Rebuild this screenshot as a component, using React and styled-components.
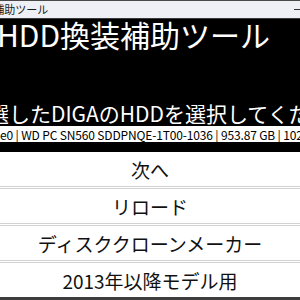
import React from "react";
import styled, { createGlobalStyle } from "styled-components";

// HDD換装補助ツール - cropped window view

const Global = createGlobalStyle`
  html, body {
    margin: 0;
    padding: 0;
    background: #ffffff;
  }
  body {
    width: 300px;
    height: 300px;
    overflow: hidden;
    font-family: "Noto Sans CJK JP", "Noto Sans", sans-serif;
  }
`;

const Window = styled.div`
  width: 300px;
  height: 300px;
  display: flex;
  flex-direction: column;
  overflow: hidden;
  background: #ffffff;
`;

const TitleBar = styled.div`
  height: 17px;
  flex-shrink: 0;
  display: flex;
  align-items: center;
  justify-content: space-between;
  background: #eff0f6;
  border-top: 1px solid #4a4a4a;
  border-bottom: 1px solid #3a3a3a;
  overflow: hidden;
`;

const TitleText = styled.span`
  font-size: 11px;
  line-height: 1;
  color: #1a1a1a;
  white-space: nowrap;
  margin-left: -52px;
`;

const Minimize = styled.span`
  width: 7px;
  height: 1px;
  background: #333;
  margin-right: -1px;
`;

const Header = styled.div`
  height: 133px;
  flex-shrink: 0;
  background: #000000;
  display: flex;
  flex-direction: column;
  overflow: hidden;
`;

const BigTitle = styled.div`
  color: #ffffff;
  font-size: 30px;
  line-height: 30px;
  margin-top: 0;
  margin-left: -3px;
  white-space: nowrap;
`;

const Prompt = styled.div`
  color: #ffffff;
  font-size: 21px;
  line-height: 24px;
  margin-top: 52px;
  margin-left: -12px;
  white-space: nowrap;
`;

const DriveRow = styled.div`
  background: #ffffff;
  color: #000000;
  height: 16px;
  display: flex;
  align-items: center;
  font-size: 12px;
  letter-spacing: -0.15px;
  white-space: nowrap;
  overflow: hidden;
  margin-top: 1px;
`;

const Buttons = styled.div`
  flex: 1;
  display: flex;
  flex-direction: column;
  background: #ffffff;
  border-bottom: 3px solid #3d3d3d;
`;

const ActionButton = styled.button`
  flex: 1;
  display: flex;
  align-items: center;
  justify-content: center;
  background: #ffffff;
  border: none;
  border-top: ${(p) => (p.first ? "none" : "3px double #d2d2d2")};
  padding: 0;
  font-family: "Noto Sans CJK JP", "Noto Sans", sans-serif;
  font-size: 19px;
  color: #111111;
  cursor: pointer;
`;

export default function App() {
  return (
    <Window>
      <Global />
      <TitleBar>
        <TitleText>HDD換装補助ツール</TitleText>
        <Minimize />
      </TitleBar>
      <Header>
        <BigTitle>HDD換装補助ツール</BigTitle>
        <Prompt>選したDIGAのHDDを選択してください</Prompt>
        <DriveRow>e0 | WD PC SN560 SDDPNQE-1T00-1036 | 953.87 GB | 1024209543168</DriveRow>
      </Header>
      <Buttons>
        <ActionButton first>次へ</ActionButton>
        <ActionButton>リロード</ActionButton>
        <ActionButton>ディスククローンメーカー</ActionButton>
        <ActionButton>2013年以降モデル用</ActionButton>
      </Buttons>
    </Window>
  );
}
